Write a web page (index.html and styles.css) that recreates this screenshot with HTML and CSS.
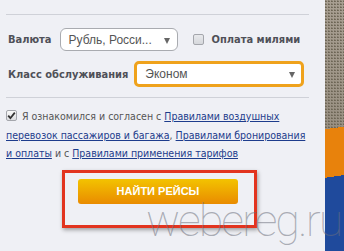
FILE: index.html
```html
<!DOCTYPE html>
<html lang="ru">
<head>
<meta charset="utf-8">
<link rel="stylesheet" href="styles.css">
</head>
<body>
<div class="page">
  <div class="form">
    <div class="rule"></div>
    <div class="row row-currency">
      <span class="label">Валюта</span>
      <div class="select select-currency">
        <span class="select-text">Рубль, Росси...</span>
        <span class="arrow"></span>
      </div>
      <span class="box"></span>
      <span class="label">Оплата милями</span>
    </div>
    <div class="row row-class">
      <span class="label">Класс обслуживания</span>
      <div class="select select-class">
        <span class="select-text">Эконом</span>
        <span class="arrow"></span>
      </div>
    </div>
    <div class="rule rule-2"></div>
    <p class="agree">
      <span class="box checked"><svg viewBox="0 0 11 11" width="11" height="11"><path d="M2.2 5.6 L4.4 8.2 L8.8 2.6" fill="none" stroke="#333" stroke-width="1.8"/></svg></span>Я ознакомился и согласен с <a href="#">Правилами воздушных<br>перевозок пассажиров и багажа</a>, <a href="#">Правилами бронирования<br>и оплаты</a> и с <a href="#">Правилами применения тарифов</a>
    </p>
    <div class="highlight">
      <button class="find">НАЙТИ РЕЙСЫ</button>
    </div>
  </div>
  <div class="strip"></div>
  <div class="watermark">webereg.ru</div>
</div>
</body>
</html>
```

FILE: styles.css
```css
html, body {
  margin: 0;
  padding: 0;
}
body {
  width: 344px;
  height: 251px;
  overflow: hidden;
  background: #eff0f5;
  font-family: "DejaVu Sans Condensed", "DejaVu Sans", sans-serif;
  color: #555;
}
.page {
  position: relative;
  display: flex;
  width: 344px;
  height: 251px;
}
.form {
  width: 303px;
  padding: 14px 16px 0 6px;
}
.rule {
  height: 1px;
  background: #cfd1d8;
}
.row {
  display: flex;
  align-items: center;
  padding-left: 2px;
}
.row-currency {
  margin-top: 13px;
}
.row-class {
  margin-top: 10px;
}
.label {
  font-weight: bold;
  font-size: 11px;
  color: #4f5058;
}
.select {
  position: relative;
  box-sizing: border-box;
  background: #fff;
  display: flex;
  align-items: center;
  font-family: "Liberation Sans", Arial, sans-serif;
  font-size: 12px;
  color: #555;
}
.select-currency {
  width: 118px;
  height: 23px;
  margin-left: 8px;
  border: 1px solid #a9abb0;
  border-radius: 6px;
  padding-left: 8px;
}
.select-class {
  width: 170px;
  height: 26px;
  margin-left: 6px;
  border: 3px solid #efa21c;
  border-radius: 5px;
  padding-left: 8px;
}
.arrow {
  position: absolute;
  right: 7px;
  top: 50%;
  margin-top: -2px;
  width: 0;
  height: 0;
  border-left: 3.5px solid transparent;
  border-right: 3.5px solid transparent;
  border-top: 6px solid #666;
}
.select-class .arrow {
  right: 6px;
}
.box {
  box-sizing: border-box;
  display: inline-block;
  width: 11px;
  height: 11px;
  border: 1px solid #a4a6ac;
  border-radius: 2px;
  background: linear-gradient(#e8e9ec, #d6d8dc);
}
.row-currency .box {
  margin-left: 15px;
  margin-right: 8px;
}
.box.checked {
  position: relative;
  top: 1px;
  margin-right: 5px;
  background: linear-gradient(#fafafa, #dcdde0);
}
.box.checked svg {
  position: absolute;
  left: -1px;
  top: -1px;
}
.rule-2 {
  margin-top: 10px;
}
.agree {
  margin: 9px 0 0 0;
  font-size: 10.5px;
  line-height: 18.5px;
  white-space: nowrap;
  color: #555;
}
.agree a {
  color: #1d3c8c;
  text-decoration: underline;
}
.highlight {
  box-sizing: border-box;
  width: 195px;
  height: 58px;
  margin: 7px 0 0 56px;
  border: 3px solid #e2341f;
  padding: 6px 0 0 13px;
  box-shadow: 1px 2px 4px rgba(0, 0, 0, 0.35);
}
.find {
  display: block;
  width: 160px;
  height: 25px;
  border: none;
  border-radius: 3px;
  background: linear-gradient(#f3c300, #e98b00);
  color: #fff;
  font-family: "Liberation Sans", Arial, sans-serif;
  font-weight: bold;
  font-size: 11px;
  padding: 0;
}
.strip {
  width: 19px;
  height: 251px;
  background:
    linear-gradient(172deg, transparent 0, transparent 128px, #e8820c 128px, #e8820c 176px, #1f4a9c 176px),
    radial-gradient(circle at 30% 40%, #6d6555 0.6px, transparent 1px) 0 0 / 3px 3px,
    linear-gradient(#a89f92, #8a8172);
}
.watermark {
  position: absolute;
  left: 146px;
  top: 198px;
  font-family: Roboto, "Liberation Sans", sans-serif;
  font-weight: 100;
  font-size: 45px;
  letter-spacing: -2px;
  color: rgba(110, 112, 125, 0.55);
  line-height: 1;
}
```
